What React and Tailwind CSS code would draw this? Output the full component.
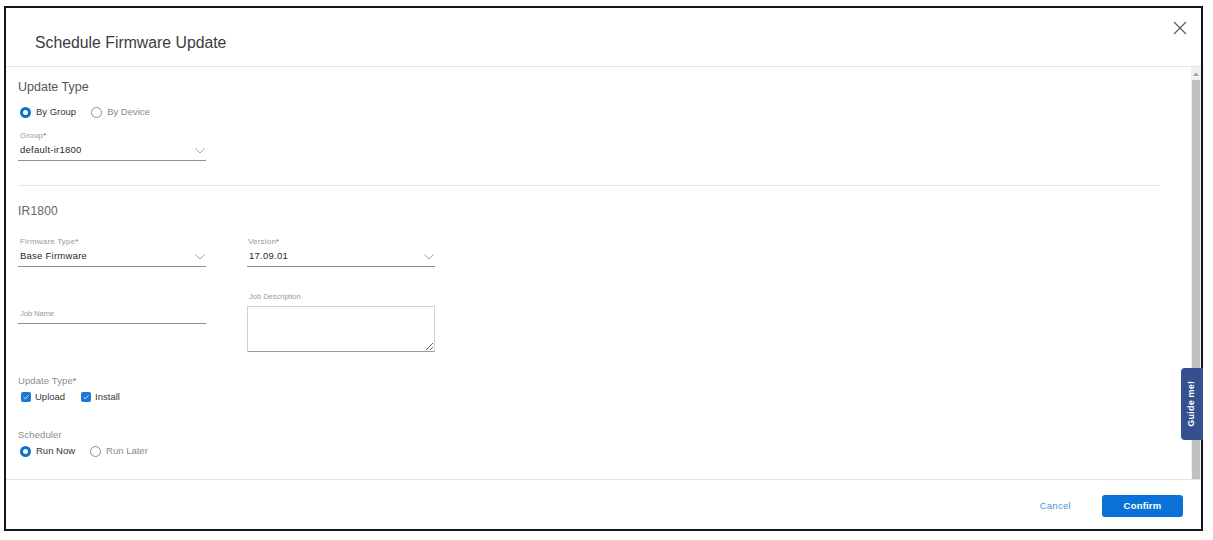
import React from "react";

const Chevron = () => (
  <svg width="10" height="6" viewBox="0 0 10 6" className="shrink-0">
    <path d="M0.5 0.5 L5 5 L9.5 0.5" fill="none" stroke="#9a9a9a" strokeWidth="0.9" />
  </svg>
);

const Radio = ({ on }) =>
  on ? (
    <span className="inline-block w-[11px] h-[11px] rounded-full border-[3px] border-[#0b6fd0] bg-white shrink-0" />
  ) : (
    <span className="inline-block w-[11px] h-[11px] rounded-full border border-[#8c8c8c] bg-white shrink-0" />
  );

const Check = () => (
  <span className="inline-flex items-center justify-center w-[10px] h-[10px] rounded-[2px] bg-[#1a78d6] shrink-0">
    <svg width="8" height="8" viewBox="0 0 8 8">
      <path d="M1.6 4.2 L3.3 5.8 L6.4 2.4" fill="none" stroke="#cfe3f7" strokeWidth="1" />
    </svg>
  </span>
);

const Label = ({ children, req }) => (
  <div className="h-[10px] leading-[10px] text-[8px] text-[#9a9a9a] tracking-[0.2px]">
    {children}
    {req && <span className="text-[#e0433a]">*</span>}
  </div>
);

const Select = ({ value }) => (
  <div className="h-[20px] flex items-center justify-between border-b border-[#8f8f8f] pl-[2px] pr-[1px]">
    <span className="text-[9.5px] text-[#2a2a2a] tracking-[0.25px]">{value}</span>
    <Chevron />
  </div>
);

export default function App() {
  return (
    <div
      className="w-[1213px] h-[540px] bg-white relative overflow-hidden"
      style={{ fontFamily: '"Liberation Sans", Arial, sans-serif' }}
    >
      <div className="ml-[4px] mt-[6px] w-[1199px] h-[525px] border-2 border-[#151515] flex flex-col relative bg-white">
        {/* Header */}
        <div className="h-[59px] shrink-0 border-b border-[#e4e4e4] flex justify-between">
          <div className="pl-[29px] pt-[25px] text-[15.8px] leading-[20px] text-[#3c3c3c]">
            Schedule Firmware Update
          </div>
          <div className="pt-[13px] pr-[14px]">
            <svg width="14" height="14" viewBox="0 0 14 14">
              <path d="M1 1 L13 13 M13 1 L1 13" stroke="#5a5a5a" strokeWidth="1.2" fill="none" />
            </svg>
          </div>
        </div>

        {/* Body */}
        <div className="h-[412px] shrink-0 flex">
          <div className="flex-1 pl-[12px] pr-[32px] overflow-hidden">
            <div className="mt-[12px] h-[16px] leading-[16px] text-[12.5px] text-[#555]">Update Type</div>
            <div className="mt-[10px] h-[14px] flex items-center ml-[2px]">
              <Radio on />
              <span className="ml-[5px] text-[9.5px] text-[#333]">By Group</span>
              <span className="ml-[15px]" />
              <Radio />
              <span className="ml-[5px] text-[9.5px] text-[#8a8a8a]">By Device</span>
            </div>
            <div className="mt-[12px] w-[188px]">
              <div className="pl-[2px]">
                <Label req>Group</Label>
              </div>
              <Select value="default-ir1800" />
            </div>

            <div className="mt-[24px] border-t border-[#e6e6e6]" />

            <div className="mt-[17px] h-[16px] leading-[16px] text-[12px] text-[#666] tracking-[0.2px]">IR1800</div>

            <div className="mt-[18px] flex gap-[41px]">
              <div className="w-[188px]">
                <div className="pl-[2px]">
                  <Label req>Firmware Type</Label>
                </div>
                <Select value="Base Firmware" />
              </div>
              <div className="w-[188px]">
                <div className="pl-[1px]">
                  <Label req>Version</Label>
                </div>
                <Select value="17.09.01" />
              </div>
            </div>

            <div className="flex gap-[41px]">
              <div className="w-[188px] pt-[42px]">
                <div className="pl-[2px] h-[10px] leading-[10px] text-[7.5px] text-[#9a9a9a]">Job Name</div>
                <div className="h-[5px] border-b border-[#8f8f8f]" />
              </div>
              <div className="w-[188px] pt-[25px]">
                <div className="pl-[2px] h-[10px] leading-[10px] text-[7.5px] text-[#9a9a9a]">Job Description</div>
                <textarea className="mt-[4px] block w-[188px] h-[46px] border border-[#d2d2d2] border-b-[#9a9a9a] outline-none resize" />
              </div>
            </div>

            <div className="mt-[23px] h-[12px] leading-[12px] text-[9.5px] text-[#8c8c8c] tracking-[0.1px]">
              Update Type<span className="text-[#e0433a]">*</span>
            </div>
            <div className="mt-[3px] h-[14px] flex items-center ml-[3px]">
              <Check />
              <span className="ml-[4px] text-[9.5px] text-[#3a3a3a]">Upload</span>
              <span className="ml-[16px]" />
              <Check />
              <span className="ml-[4px] text-[9.5px] text-[#3a3a3a]">Install</span>
            </div>

            <div className="mt-[25px] h-[12px] leading-[12px] text-[9.5px] text-[#8c8c8c] tracking-[0.1px]">Scheduler</div>
            <div className="mt-[3px] h-[14px] flex items-center ml-[2px]">
              <Radio on />
              <span className="ml-[5px] text-[9.5px] text-[#333]">Run Now</span>
              <span className="ml-[15px]" />
              <Radio />
              <span className="ml-[5px] text-[9.5px] text-[#8a8a8a]">Run Later</span>
            </div>
          </div>

          {/* Scrollbar */}
          <div className="w-[10px] shrink-0 bg-[#f1f1f1] flex flex-col">
            <div className="h-[13px] flex items-center justify-center">
              <svg width="6" height="4" viewBox="0 0 6 4">
                <path d="M0 4 L3 0.5 L6 4 Z" fill="#a3a3a3" />
              </svg>
            </div>
            <div className="flex-1 mx-[1px] bg-[#c1c1c1]" />
          </div>
        </div>

        {/* Footer */}
        <div className="flex-1 border-t border-[#e4e4e4] flex items-start justify-end pr-[18px]">
          <div className="mt-[15px] h-[22px] flex items-center text-[9.5px] font-medium text-[#4a94dc] mr-[31px] tracking-[0.3px]">
            Cancel
          </div>
          <div className="mt-[15px] w-[81px] h-[22px] rounded-[3px] bg-[#0a72d6] flex items-center justify-center text-[9.5px] font-bold text-white tracking-[0.2px]">
            Confirm
          </div>
        </div>

        {/* Guide me tab */}
        <div className="absolute left-[1175px] top-[360px] w-[22px] h-[72px] bg-[#34508f] rounded-l-[4px] flex items-center justify-center">
          <span className="-rotate-90 whitespace-nowrap text-[9px] font-bold text-white tracking-[0.2px]">Guide me!</span>
        </div>
      </div>
    </div>
  );
}
